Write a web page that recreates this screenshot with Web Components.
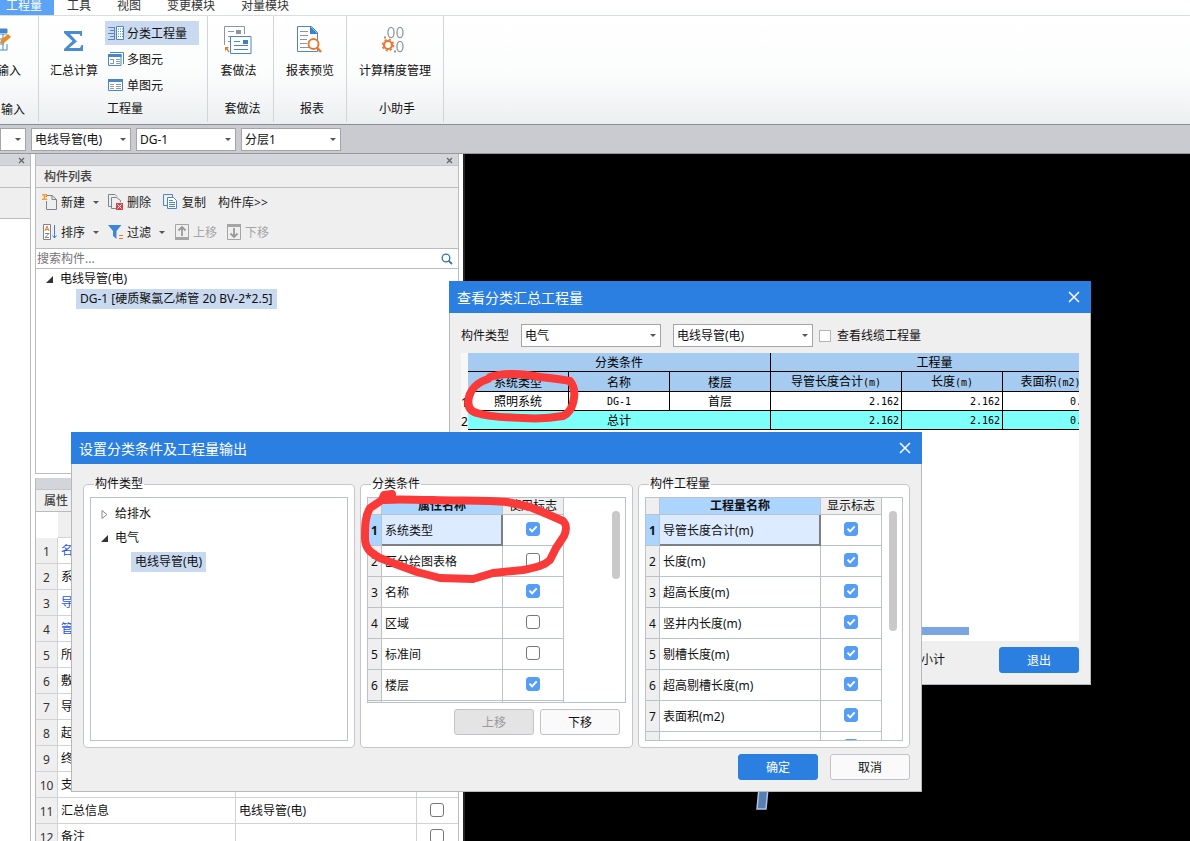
<!DOCTYPE html>
<html lang="zh-CN">
<head>
<meta charset="utf-8">
<title>工程量</title>
<style>
  html, body { margin: 0; height: 100%; overflow: hidden; }
  body { font: 12px/16px "Noto Sans", "Noto Sans CJK SC", sans-serif; color: #111; background: #fff; }
</style>
</head>
<body>
<app-shell></app-shell>
<script>
const BASE = '*{box-sizing:border-box}:host{display:block}button,input,select{font:inherit;color:inherit;margin:0}svg{display:block}';
function define(name, css, html, setup) {
  const tpl = document.createElement('template');
  customElements.define(name, class extends HTMLElement {
    connectedCallback() {
      if (this.shadowRoot) return;
      tpl.innerHTML = `<style>${BASE}${css}</style>` + (typeof html === 'function' ? html(this) : html);
      this.attachShadow({ mode: 'open' }).append(tpl.content.cloneNode(true));
      if (setup) setup(this, this.shadowRoot);
    }
  });
}
const attr = (el, n, d = '') => el.getAttribute(n) ?? d;

/* ---------- small controls ---------- */
define('check-box', `
  :host{display:inline-block;width:14px;height:14px;line-height:0}
  input{appearance:none;display:block;width:14px;height:14px;border:1px solid #777;border-radius:3px;background:#fff}
  input:checked{border-color:#559df5;background:#559df5}
  span{display:grid}
  input,svg{grid-area:1/1}
  svg{display:none;pointer-events:none}
  input:checked+svg{display:block}
  :host([plain]),:host([plain]) input{width:12px;height:12px}
  :host([plain]) input{border-color:#b4b4b4;border-radius:0}`,
  el => `<span><input type="checkbox" aria-label="${attr(el, 'label')}" ${el.hasAttribute('checked') ? 'checked' : ''}><svg width="14" height="14" viewBox="0 0 14 14"><path d="M3.5 6.6l2.6 2.8 4.6-5" fill="none" stroke="#fff" stroke-width="2"/></svg></span>`);

define('push-button', `
  :host{width:80px}
  button{display:block;width:100%;height:26px;padding:2px 0 0;border:1px solid #c0c4ca;border-radius:3px;background:#fafafb}
  :host([primary]) button{background:#2b7fe0;border-color:#2b7fe0;color:#fff}
  button:disabled{background:#e4e4e5;color:#999}`,
  el => `<button type="button" ${el.hasAttribute('disabled') ? 'disabled' : ''}><slot></slot></button>`);

define('combo-box', `
  :host{position:relative;width:100px;height:23px}
  select{appearance:none;display:block;width:100%;height:100%;padding:0 16px 0 3px;border:1px solid #a3a5a9;border-radius:0;background:#fff}
  i{position:absolute;right:5px;top:10px;border:3px solid transparent;border-top-color:#555;border-bottom:0;pointer-events:none}`,
  el => `<select aria-label="${attr(el, 'label')}"><option>${attr(el, 'value')}</option></select><i></i>`);

/* ---------- ribbon ---------- */
define('ribbon-tabs', `
  nav{display:flex;height:16px;border-bottom:1px solid #d9dee3;background:#fff}
  a{padding:0 13px;height:15px;line-height:12px;color:#333;text-decoration:none}
  a[aria-current]{padding:0 12px 0 6px;background:#5ba3f5;color:#fff}`,
  `<nav><a href="#q" aria-current="page">工程量</a><a href="#t">工具</a><a href="#v">视图</a><a href="#c">变更模块</a><a href="#d">对量模块</a></nav>`);

define('ribbon-group', `
  :host{border-right:1px solid #d0d5da;height:100%}
  section{display:flex;flex-direction:column;height:100%}
  .items{flex:1;display:flex;justify-content:center;padding-top:5px}
  .name{text-align:center;height:22px;line-height:18px;padding-left:4px}`,
  el => `<section><div class="items"><slot></slot></div><div class="name">${attr(el, 'label')}</div></section>`);

define('ribbon-button', `
  button{display:flex;flex-direction:column;align-items:center;border:0;background:none;padding:4px 0 0;white-space:nowrap}
  .icon{height:38px}
  :host([small]) button{flex-direction:row;gap:3px;width:94px;height:24px;padding:0 3px}
  :host([small]) .icon{height:16px}
  :host([small]) .text{padding-top:2px}
  :host([active]) button{background:#c9daf0}`,
  `<button type="button"><span class="icon"><slot name="icon"></slot></span><span class="text"><slot></slot></span></button>`);

define('ribbon-bar', `
  :host{height:109px;border-bottom:1px solid #8b8e94;background:linear-gradient(#fff,#fbfcfc 55%,#eceff1)}
  .bar{display:flex;height:106px}
  .cut{flex:none;width:39px;height:106px;overflow:hidden;border-right:1px solid #d0d5da}
  .cut p{margin:0;white-space:nowrap}
  .cut .a{margin-left:-3px;height:39px}
  .cut svg{margin:12px 0 11px}
  .cut .b{padding-left:1px}
  .qty{width:169px}.mk{width:66px}.rep{width:73px}.help{width:97px}
  .col{display:flex;flex-direction:column;gap:2px}
  .sum{margin:0 7px 0 3px}
  .mk ribbon-button{margin-right:4px}`,
  `<div class="bar">
    <div class="cut"><svg width="12" height="24" viewBox="0 0 12 24"><path d="M0 1h7v4M0 22h7v-6M0 6h7M0 11h4M0 16h4M3 6v16" fill="none" stroke="#4a86c8"/><path d="M0 1h7v4H0z" fill="#4a86c8"/><path d="M0 15l1-3 7-6 3 3-7 6z" fill="#f08a1c"/></svg><p class="a">输入</p><p class="b">输入</p></div>
    <ribbon-group class="qty" label="工程量">
      <ribbon-button class="sum"><svg slot="icon" width="32" height="32" viewBox="0 0 32 32"><path d="M6 6h18v5h-1.500l-1-2H12l7 7.500L11 23h11l1.500-3H25v6H6v-2l8.500-8L6 8z" fill="#4b8bd0"/></svg>汇总计算</ribbon-button>
      <div class="col">
        <ribbon-button small active><svg slot="icon" width="16" height="16" viewBox="0 0 16 16"><path d="M0 2.500h6M2 5.500h4M0 8.500h6M2 11.500h4M0 14.500h6M6.500 2v13" stroke="#5e87b5" fill="none"/><path d="M8.500 1.500h7v13h-7z" fill="#fff" stroke="#4a86c8"/><path d="M10 4h5M10 6.500h5M10 9h5M10 11.500h5" stroke="#4a86c8" stroke-dasharray="1 1"/></svg>分类工程量</ribbon-button>
        <ribbon-button small><svg slot="icon" width="16" height="16" viewBox="0 0 16 16"><path d="M2 1.500h13.500V13" fill="none" stroke="#4a86c8"/><path d="M.5 3.500h12.500v11H.5z" fill="#fff" stroke="#4a86c8"/><path d="M0 3h13.500v3H0z" fill="#4a86c8"/><path d="M2 8.500h4M2 12.500h4M5.500 9v3M8 8.500h4M8 10.500h4M8 12.500h4" stroke="#8b9bab" fill="none"/></svg>多图元</ribbon-button>
        <ribbon-button small><svg slot="icon" width="16" height="16" viewBox="0 0 16 16"><path d="M.5 2.500h14v11H.5z" fill="#fff" stroke="#4a86c8"/><path d="M0 2h15v3H0z" fill="#4a86c8"/><path d="M2 7.500h4M2 9.500h4M2 11.500h4M8 7.500h5M8 9.500h5M8 11.500h5" stroke="#8b9bab" fill="none"/></svg>单图元</ribbon-button>
      </div>
    </ribbon-group>
    <ribbon-group class="mk" label="套做法"><ribbon-button><svg slot="icon" width="32" height="32" viewBox="0 0 32 32"><path d="M2.500 20V1.500h20V9" fill="#fff" stroke="#8c96a0"/><path d="M6 6.500h6M6 11.500h4M6 16.500h2" stroke="#8c96a0"/><path d="M14 5h5v4h-5z" fill="#8c96a0"/><path d="M8.500 11.500h20.500v17H8.500z" fill="#fff" stroke="#4a86c8"/><path d="M12 16.500h6M12 20.500h14M12 24.500h14" stroke="#4a86c8"/><path d="M21 15h5v4h-5z" fill="#3c7ed0"/><path d="M3 22h4l-1.500 1.500 2 3-1 1-2-3L3 26z" fill="#e87830"/></svg>套做法</ribbon-button></ribbon-group>
    <ribbon-group class="rep" label="报表"><ribbon-button><svg slot="icon" width="32" height="32" viewBox="0 0 32 32"><path d="M3.500 1.500h14l6 6v19h-20z" fill="#fff" stroke="#4a86c8"/><path d="M16 1l8 8h-8z" fill="#3c7ed0"/><path d="M6 6.500h8M6 10.500h8M6 14.500h7M6 18.500h7M6 22.500h9" stroke="#8c96a0"/><circle cx="19.500" cy="19" r="5" fill="#fff" stroke="#e87830" stroke-width="2"/><path d="M23 22.500l4 4.500" stroke="#e87830" stroke-width="2.500"/></svg>报表预览</ribbon-button></ribbon-group>
    <ribbon-group class="help" label="小助手"><ribbon-button><svg slot="icon" width="32" height="32" viewBox="0 0 32 32"><g fill="none" stroke="#8c96a0" stroke-width="1.300"><ellipse cx="12" cy="7.500" rx="3" ry="5.200"/><ellipse cx="21" cy="7.500" rx="3" ry="5.200"/><ellipse cx="21" cy="21.500" rx="3" ry="5.200"/></g><path d="M5 11.500h2v2H5zM15 25.500h2v2h-2z" fill="#8c96a0"/><circle cx="9" cy="20" r="4" fill="none" stroke="#e87830" stroke-width="2.200"/><circle cx="9" cy="20" r="5.500" fill="none" stroke="#e87830" stroke-width="1.600" stroke-dasharray="2.160 2.160"/></svg>计算精度管理</ribbon-button></ribbon-group>
  </div>`);

define('context-bar', `
  :host{height:29px;background:#cacbd0;border-bottom:1px solid #96989d}
  div{display:flex;gap:5px;padding-top:3px}
  .cut{width:26px}`,
  `<div><combo-box class="cut" label="楼层" value=""></combo-box><combo-box label="构件类型" value="电线导管(电)"></combo-box><combo-box label="构件" value="DG-1"></combo-box><combo-box label="分层" value="分层1"></combo-box></div>`);

/* ---------- docked panels ---------- */
define('dock-panel', `
  :host{display:flex;flex-direction:column;border:1px solid #b9bbbf;border-top:0;background:#fff;overflow:hidden}
  .grip{flex:none;display:flex;justify-content:flex-end;align-items:center;height:12px;padding:2px 4px 0 0;background:#d3d5da;border-bottom:1px solid #c2c4c8}
  button{border:0;background:none;padding:0;width:9px;height:9px}
  h2{flex:none;margin:0;height:22px;padding-left:8px;font-size:12px;font-weight:500;line-height:22px;color:#444;background:#efefef;border-bottom:1px solid #b9bbbf}`,
  el => `<div class="grip"><button type="button" aria-label="关闭"><svg width="9" height="9" viewBox="0 0 9 9"><path d="M2 2l5 5M7 2l-5 5" stroke="#666" stroke-width="1.300"/></svg></button></div><h2>${attr(el, 'label')}</h2><slot></slot>`);

define('tool-button', `
  button{display:flex;align-items:center;gap:3px;height:20px;border:0;background:none;padding:0;color:#222;white-space:nowrap}
  button:disabled{color:#a5a5a5}
  span{padding-top:2px}
  i{margin-left:5px;border:3px solid transparent;border-top-color:#555;border-bottom:0}`,
  el => `<button type="button" ${el.hasAttribute('disabled') ? 'disabled' : ''}><slot name="icon"></slot><span><slot></slot></span>${el.hasAttribute('menu') ? '<i></i>' : ''}</button>`);

define('component-list', `
  :host{flex:1;min-height:0;display:flex;flex-direction:column}
  .tools{background:#efefef;border-bottom:1px solid #b9bbbf;padding:4px 0 6px 6px;height:61px;display:flex;flex-direction:column;gap:10px}
  .row{display:flex;gap:9px}
  .row .copy,.row .lib{margin-left:3px}
  label{display:flex;align-items:center;height:20px;border-bottom:1px solid #b9bbbf;padding:0 5px 0 1px}
  input{flex:1;min-width:0;border:0;outline:0;padding:0;height:18px;background:none}
  input::placeholder{color:#757575;opacity:1}
  ul{list-style:none;margin:0;padding:0}
  li{display:flex;align-items:center;height:20px;gap:7px;padding-left:10px}
  li svg{flex:none}
  .leaf{padding-left:40px}
  .leaf span{background:#c9daf0;padding:0 4px;line-height:20px}`,
  `<div class="tools"><div class="row">
    <tool-button menu><svg slot="icon" width="16" height="16" viewBox="0 0 16 16"><path d="M4.500 3V1.500H10l4.500 4v10h-10V7M10 1.500v4h4.500" fill="none" stroke="#7c858e"/><path d="M0 .5h5M0 5.500h5M2.500 0v6M.3.8l4.500 4.500M4.800.8L.3 5.300" stroke="#f2a12c" fill="none"/></svg>新建</tool-button>
    <tool-button><svg slot="icon" width="16" height="16" viewBox="0 0 16 16"><path d="M3 12.500H.5V.5H7l2 2M8 14.500H3.500v-11h5l4 3V8" fill="none" stroke="#7c858e"/><path d="M8 9h7v7H8z" fill="#d8414a"/><path d="M9.500 10.500l4 4M13.500 10.500l-4 4" stroke="#fff"/></svg>删除</tool-button>
    <tool-button class="copy"><svg slot="icon" width="16" height="16" viewBox="0 0 16 16"><path d="M4 11.500H.5V.5h9V3" fill="none" stroke="#4a86c8"/><path d="M4.500 3.500h6l3 3v8h-9z" fill="#fff" stroke="#4a86c8"/><path d="M6 6.500h4M6 8.500h6M6 10.500h6M6 12.500h6" stroke="#4a86c8"/></svg>复制</tool-button>
    <tool-button class="lib">构件库&gt;&gt;</tool-button></div>
   <div class="row">
    <tool-button menu><svg slot="icon" width="16" height="16" viewBox="0 0 16 16"><path d="M1.500.5h7v15h-7z" fill="#fff" stroke="#7c858e"/><path d="M3 7l2-5 2 5M3.500 5.500h3" fill="none" stroke="#e87830"/><path d="M3 9.500h4l-4 4h4" fill="none" stroke="#7c858e"/><path d="M12.500 1v13M10.500 11.500l2 2.500 2-2.500" fill="none" stroke="#3c7ed0"/></svg>排序</tool-button>
    <tool-button menu><svg slot="icon" width="16" height="16" viewBox="0 0 16 16"><path d="M0 1h13.500L8.500 7v8L5 12V7z" fill="#3c86dc"/><path d="M11 11.500h4M11 14.500h4" stroke="#e87830"/></svg>过滤</tool-button>
    <tool-button disabled><svg slot="icon" width="16" height="16" viewBox="0 0 16 16"><path d="M1.500.5h13v15h-13z" fill="none" stroke="#a5a5a5"/><path d="M1 13h14v3H1z" fill="#a5a5a5"/><path d="M8 12V3M4.500 6.500L8 3l3.500 3.500" fill="none" stroke="#999" stroke-width="1.800"/></svg>上移</tool-button>
    <tool-button disabled><svg slot="icon" width="16" height="16" viewBox="0 0 16 16"><path d="M1.500.5h13v15h-13z" fill="none" stroke="#a5a5a5"/><path d="M1 0h14v3H1z" fill="#a5a5a5"/><path d="M8 4v9M4.500 9.500L8 13l3.500-3.500" fill="none" stroke="#999" stroke-width="1.800"/></svg>下移</tool-button></div></div>
   <label><input type="text" placeholder="搜索构件..." aria-label="搜索构件"><svg width="12" height="12" viewBox="0 0 12 12"><circle cx="5" cy="5" r="3.800" fill="none" stroke="#2e77a8" stroke-width="1.300"/><path d="M7.800 7.800l3.200 3.200" stroke="#2e77a8" stroke-width="1.800"/></svg></label>
   <ul><li><svg width="7" height="7"><path d="M7 0v7H0z" fill="#333"/></svg>电线导管(电)</li><li class="leaf"><span>DG-1 [硬质聚氯乙烯管 20 BV-2*2.5]</span></li></ul>`);

const PROPS = [['名', '', 1], ['系', ''], ['导', '', 1], ['管', '', 1], ['所', ''], ['敷', ''], ['导', ''], ['起', ''], ['终', ''], ['支', ''], ['汇总信息', '电线导管(电)'], ['备注', '']];
define('property-table', `
  table{width:100%;border-spacing:0;table-layout:fixed}
  th,td{height:26px;padding:0 3px;border-right:1px solid #cfd2d6;border-bottom:1px solid #cfd2d6;text-align:left;font-weight:400;white-space:nowrap;overflow:hidden}
  thead th{background:#efefef;border-right:0}
  thead td{border:0}
  tbody th{background:#efefef;text-align:center;padding:2px 0 0;color:#333}
  .key{color:#1f55e6}
  td:last-child{text-align:center;border-right:0;padding:0 1px 2px 0}
  check-box{vertical-align:middle}`,
  `<table><colgroup><col style="width:22px"><col style="width:178px"><col><col style="width:41px"></colgroup><thead><tr><td></td><th></th><th></th><th></th></tr></thead><tbody>${PROPS.map(([n, v, k], i) => `<tr><th scope="row">${i + 1}</th><td class="${k ? 'key' : ''}">${n}</td><td>${v}</td><td><check-box label="附加"></check-box></td></tr>`).join('')}</tbody></table>`);

/* ---------- dialogs ---------- */
define('app-dialog', `
  :host{display:flex;flex-direction:column;position:absolute;background:#efefef;border:1px solid #b5b8bd;border-top:0}
  header{flex:none;display:flex;justify-content:space-between;align-items:center;height:32px;margin:0 -1px;padding:0 11px 0 8px;background:#2b7fe0;color:#fff}
  h1{margin:0;padding-top:2px;font-size:14px;line-height:20px;font-weight:400}
  button{border:0;background:none;padding:0;width:12px;height:12px}`,
  el => `<header><h1>${attr(el, 'label')}</h1><button type="button" aria-label="关闭"><svg width="12" height="12" viewBox="0 0 12 12"><path d="M1 1l10 10M11 1L1 11" stroke="#fff" stroke-width="1.500"/></svg></button></header><slot></slot>`);

define('summary-view', `
  :host{flex:1;display:flex;flex-direction:column;padding:11px 11px 11px;min-height:0}
  .filters{display:flex;align-items:center;height:23px}
  .filters combo-box{width:140px;margin-left:12px}
  .filters check-box{margin:0 6px}
  .grid{flex:1;min-height:0;margin:6px 0;background:#fff;overflow:hidden;display:flex;flex-direction:column;justify-content:space-between}
  table{border-spacing:0;table-layout:fixed;width:638px;color:#000}
  th,td{height:19px;padding:2px 2px 0;border-right:1px solid #000;border-bottom:1px solid #000;text-align:center;font-weight:400;line-height:16px;white-space:nowrap;overflow:hidden}
  thead th{background:#a6cbf0}
  tr .no{padding:2px 0 0;background:#f7f7f7;border:0}
  .n{text-align:right}
  .n:last-child{padding-right:16px}
  .m,.n{font-family:"DejaVu Sans Mono",monospace;font-size:10px}
  .sum td{background:#7dfffa}
  .bar{width:508px;height:8px;margin-bottom:6px;background:#7aa5e3}
  footer{display:flex;justify-content:flex-end;align-items:center;gap:54px}`,
  `<div class="filters"><span>构件类型</span><combo-box label="构件类型" value="电气"></combo-box><combo-box label="构件" value="电线导管(电)"></combo-box><check-box plain label="查看线缆工程量"></check-box><span>查看线缆工程量</span></div>
  <div class="grid"><table><colgroup><col style="width:7px"><col style="width:101px"><col style="width:101px"><col style="width:101px"><col style="width:131px"><col style="width:101px"><col></colgroup>
  <thead><tr><th class="no"></th><th colspan="3">分类条件</th><th colspan="3">工程量</th></tr>
  <tr><th class="no"></th><th>系统类型</th><th>名称</th><th>楼层</th><th>导管长度合计<span class="m">(m)</span></th><th>长度<span class="m">(m)</span></th><th>表面积<span class="m">(m2)</span></th></tr></thead>
  <tbody><tr><th class="no">1</th><td>照明系统</td><td class="m">DG-1</td><td>首层</td><td class="n">2.162</td><td class="n">2.162</td><td class="n">0.</td></tr>
  <tr class="sum"><th class="no">2</th><td colspan="3">总计</td><td class="n">2.162</td><td class="n">2.162</td><td class="n">0.</td></tr></tbody></table><div class="bar"></div></div>
  <footer><span>小计</span><push-button primary>退出</push-button></footer>`);

define('group-box', `
  fieldset{display:flex;flex-direction:column;min-width:0;height:273px;margin:0;padding:4px 6px 6px;border:1px solid #c3c6ca;border-radius:4px;background:#fff}
  legend{padding:0 1px;margin-left:4px;line-height:18px}`,
  el => `<fieldset><legend>${attr(el, 'label')}</legend><slot></slot></fieldset>`);

define('flag-table', `
  :host{display:flex;justify-content:space-between;border:1px solid #bcc2ca;overflow:hidden;background:#fff;min-height:0}
  table{border-spacing:0;table-layout:fixed;width:196px;align-self:flex-start}
  :host([wide]) table{width:236px}
  th,td{height:31px;padding:2px 0 0;border-right:1px solid #bcc2ca;border-bottom:1px solid #bcc2ca;font-weight:400;white-space:nowrap;line-height:16px}
  thead th{height:17px;padding:0;background:#efefef}
  thead th.on{background:#abd4ff;font-weight:700}
  tbody th{background:#efefef;text-align:center}
  td{text-align:left;padding-left:3px}
  td:last-child{text-align:center;padding:0 0 4px}
  .sel th{background:#abd4ff;font-weight:700}
  .sel .name{background:#dcebff;border-right:2px solid #7d7f83;border-bottom:2px solid #7d7f83}
  check-box{vertical-align:middle}
  .thumb{width:8px;height:68px;margin:13px 5px 0 0;border-radius:4px;background:#c9c9c9}
  :host([wide]) .thumb{height:120px}`,
  el => {
    const rows = attr(el, 'rows').split(',').map(r => r.split(':'));
    return `<table><colgroup><col style="width:14px"><col><col style="width:61px"></colgroup><thead><tr><th></th><th class="on">${attr(el, 'name')}</th><th>${attr(el, 'flag')}</th></tr></thead><tbody>${rows.map(([n, c], i) => `<tr class="${i ? '' : 'sel'}"><th scope="row">${n ? i + 1 : ''}</th><td class="name">${n}</td><td><check-box label="${n}" ${c ? 'checked' : ''}></check-box></td></tr>`).join('')}</tbody></table><div class="thumb"></div>`;
  });

define('type-tree', `
  :host{border:1px solid #bcc2ca;background:#fff;padding-top:4px}
  ul{list-style:none;margin:0;padding:0}
  li{display:flex;align-items:center;gap:7px;height:24px;padding-left:10px}
  .leaf{padding-left:40px}
  .leaf span{background:#c9daf0;padding:0 4px;line-height:20px}`,
  `<ul><li><svg width="7" height="9"><path d="M1 .5v8l5-4z" fill="#fff" stroke="#888"/></svg>给排水</li><li><svg width="7" height="7"><path d="M7 0v7H0z" fill="#333"/></svg>电气</li><li class="leaf"><span>电线导管(电)</span></li></ul>`);

define('settings-view', `
  :host{padding:11px 11px 11px}
  .groups{display:grid;grid-template-columns:272px 273px 272px;gap:5px}
  type-tree{flex:1}
  .crit{height:206px}
  .qty{flex:1}
  .move,.actions{display:flex;justify-content:flex-end}
  .move{gap:6px;padding:6px 6px 0 0}
  .actions{gap:12px;padding-top:6px}`,
  `<div class="groups">
    <group-box label="构件类型"><type-tree></type-tree></group-box>
    <group-box label="分类条件"><flag-table class="crit" name="属性名称" flag="使用标志" rows="系统类型:1,区分绘图表格,名称:1,区域,标准间,楼层:1,"></flag-table>
      <div class="move"><push-button disabled>上移</push-button><push-button>下移</push-button></div></group-box>
    <group-box label="构件工程量"><flag-table class="qty" wide name="工程量名称" flag="显示标志" rows="导管长度合计(m):1,长度(m):1,超高长度(m):1,竖井内长度(m):1,剔槽长度(m):1,超高剔槽长度(m):1,表面积(m2):1,:1"></flag-table></group-box>
  </div>
  <div class="actions"><push-button primary>确定</push-button><push-button>取消</push-button></div>`);

/* ---------- shell ---------- */
define('app-shell', `
  :host{display:flex;flex-direction:column;position:relative;height:100vh;overflow:hidden}
  ribbon-tabs,ribbon-bar,context-bar{flex:none}
  main{flex:1;min-height:0;display:flex;background:#fff}
  .nav{flex:none;width:31px;border-left:0;border-bottom:0}
  .nav div{height:31px;background:#efefef;border-bottom:1px solid #b9bbbf}
  .side{flex:none;width:424px;margin:0 4px;display:flex;flex-direction:column;gap:4px}
  .list{flex:none;height:320px}
  .props{flex:1;min-height:0;border-bottom:0}
  .canvas{flex:1;background:#000;border-left:2px solid #222528}
  .mark{position:absolute;pointer-events:none;fill:none;stroke:#fa3a38;stroke-linecap:round;stroke-linejoin:round}
  .pipe{position:absolute;left:755px;top:788px}
  .summary{left:449px;top:281px;width:642px;height:404px}
  .settings{left:71px;top:432px;width:851px;height:360px}`,
  `<ribbon-tabs></ribbon-tabs><ribbon-bar></ribbon-bar><context-bar></context-bar>
  <main><dock-panel class="nav"><div></div></dock-panel>
    <div class="side"><dock-panel class="list" label="构件列表"><component-list></component-list></dock-panel>
    <dock-panel class="props" label="属性"><property-table></property-table></dock-panel></div>
    <div class="canvas"></div></main>
  <svg class="pipe" width="16" height="24" viewBox="0 0 16 24"><path d="M4 0h9l-2 21H2z" fill="#5a7fae" stroke="#a9c4ee" stroke-width="1.500"/></svg>
  <app-dialog class="summary" label="查看分类汇总工程量"><summary-view></summary-view></app-dialog>
  <svg class="mark" style="left:455px;top:365px" width="130" height="65" viewBox="455 365 130 65" stroke-width="8"><path d="M488 379C478 382 471 389 469 397C467 405 469 411 477 413C492 418 508 417 523 418C538 419 552 418 563 416C570 413 573 405 574 398C575 391 574 386 570 381C561 379 550 378 540 377C530 375 522 374 513 374C504 374 496 375 490 377"/></svg>
  <app-dialog class="settings" label="设置分类条件及工程量输出"><settings-view></settings-view></app-dialog>
  <svg class="mark" style="left:355px;top:485px" width="220" height="105" viewBox="355 485 220 105" stroke-width="8"><path d="M392 494L384 495L382 500L370 508C365 516 365 526 365 538C365 549 371 553 380 558L398 565L417 572L440 578L473 579L493 573L523 570C538 567 545 565 550 560L556 548L564 536C567 529 567 525 563 521L547 514L530 507L507 502C484 500 458 501 433 500C413 500 400 499 384 500"/></svg>`);
</script>
</body>
</html>
